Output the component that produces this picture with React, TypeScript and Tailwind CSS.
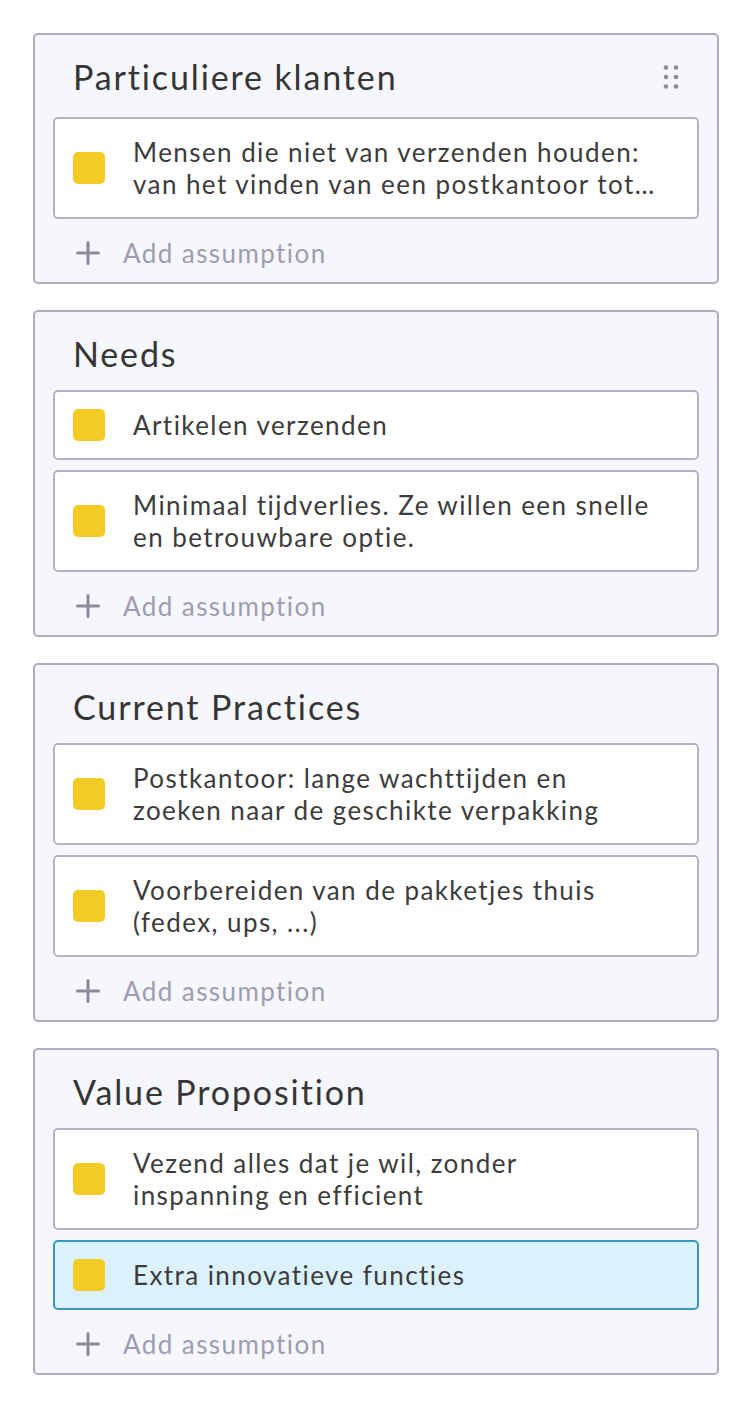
type Assumption = {
  text: string
  active?: boolean
  clamp?: boolean
}

type Section = {
  title: string
  draggable?: boolean
  items: Assumption[]
}

const sections: Section[] = [
  {
    title: 'Particuliere klanten',
    draggable: true,
    items: [
      {
        text: 'Mensen die niet van verzenden houden: van het vinden van een postkantoor tot het inpakken en versturen van hun pakket',
        clamp: true,
      },
    ],
  },
  {
    title: 'Needs',
    items: [
      { text: 'Artikelen verzenden' },
      { text: 'Minimaal tijdverlies. Ze willen een snelle en betrouwbare optie.' },
    ],
  },
  {
    title: 'Current Practices',
    items: [
      { text: 'Postkantoor: lange wachttijden en zoeken naar de geschikte verpakking' },
      { text: 'Voorbereiden van de pakketjes thuis (fedex, ups, ...)' },
    ],
  },
  {
    title: 'Value Proposition',
    items: [
      { text: 'Vezend alles dat je wil, zonder inspanning en efficient' },
      { text: 'Extra innovatieve functies', active: true },
    ],
  },
]

function DragHandle() {
  return (
    <svg width="16" height="24" viewBox="0 0 16 24" className="text-[#8d8c9c]">
      {[2.5, 12, 21.5].map((cy) => (
        <g key={cy}>
          <circle cx="3" cy={cy} r="2.3" fill="currentColor" />
          <circle cx="13" cy={cy} r="2.3" fill="currentColor" />
        </g>
      ))}
    </svg>
  )
}

function PlusIcon() {
  return (
    <svg width="24" height="24" viewBox="0 0 24 24" className="shrink-0 text-[#8b8a9c]">
      <path d="M12 1.5V22.5M1.5 12H22.5" stroke="currentColor" strokeWidth="3" strokeLinecap="round" />
    </svg>
  )
}

function AssumptionRow({ item }: { item: Assumption }) {
  return (
    <div
      className={`flex items-center rounded-[5px] border-2 py-[17px] pl-[18px] pr-[38px] ${
        item.active ? 'border-[#3b97c1] bg-[#dbf2fd]' : 'border-[#b4b3c5] bg-white'
      }`}
    >
      <div className="h-8 w-8 shrink-0 rounded-[5px] bg-[#f2cb25]" />
      <p
        className={`ml-[28px] text-[26px] leading-[32px] tracking-[0.055em] text-[#3c3c3c] ${
          item.clamp ? 'line-clamp-2' : ''
        }`}
      >
        {item.text}
      </p>
    </div>
  )
}

function SectionCard({ section }: { section: Section }) {
  return (
    <div className="rounded-[5px] border-2 border-[#adacc1] bg-[#f6f7fd] px-[18px] pb-[11px] pt-[22px]">
      <div
        className={`flex items-center justify-between pl-[20px] pr-[20px] ${
          section.draggable ? 'mb-[20px]' : 'mb-[16px]'
        }`}
      >
        <h2 className="text-[34px] leading-[40px] tracking-[0.055em] text-[#353535]">{section.title}</h2>
        {section.draggable && <DragHandle />}
      </div>
      <div className="flex flex-col gap-[10px]">
        {section.items.map((item, i) => (
          <AssumptionRow key={i} item={item} />
        ))}
      </div>
      <button className="mt-[16px] flex h-9 items-center pl-[23px] text-[26px] tracking-[0.055em] text-[#9e9db0]">
        <PlusIcon />
        <span className="ml-[23px]">Add assumption</span>
      </button>
    </div>
  )
}

export default function App() {
  return (
    <div
      className="min-h-[1406px] bg-white px-[33px] pt-[33px]"
      style={{ fontFamily: 'Lato, "Open Sans", sans-serif' }}
    >
      <div className="flex flex-col gap-[26px]">
        {sections.map((s) => (
          <SectionCard key={s.title} section={s} />
        ))}
      </div>
    </div>
  )
}
